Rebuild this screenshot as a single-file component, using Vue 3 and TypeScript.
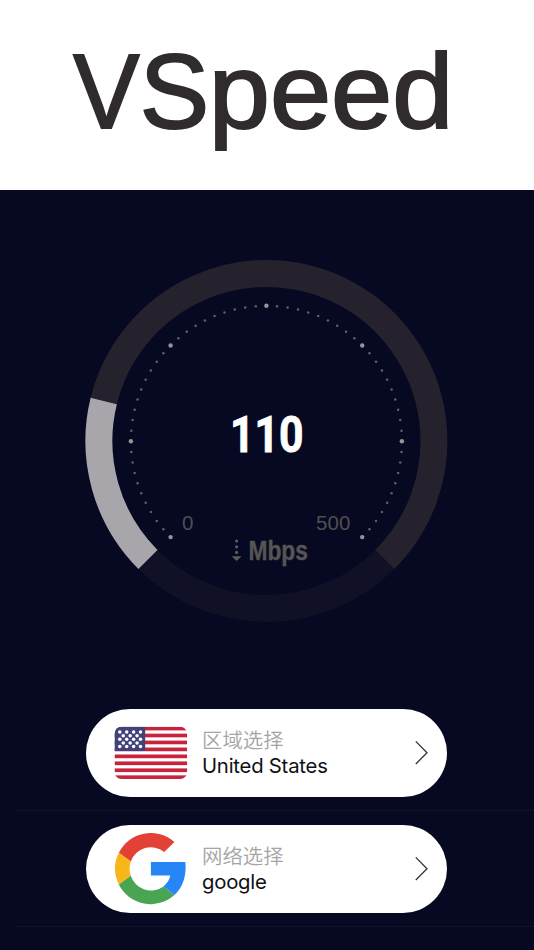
<script setup lang="ts">
interface Dot {
  x: number
  y: number
  major: boolean
}
interface Point {
  x: number
  y: number
}
interface Choice {
  id: 'region' | 'network'
  label: string
  value: string
}

const speed = 110
const maxSpeed = 500
const center = 181
const ringRadius = 167.5

function polar(angle: number, radius: number): Point {
  const rad = (angle * Math.PI) / 180
  return { x: center + radius * Math.sin(rad), y: center - radius * Math.cos(rad) }
}

function arc(from: number, to: number): string {
  const a = polar(from, ringRadius)
  const b = polar(to, ringRadius)
  const large = to - from > 180 ? 1 : 0
  return `M${a.x} ${a.y}A${ringRadius} ${ringRadius} 0 ${large} 1 ${b.x} ${b.y}`
}

const valueAngle = -135 + 58.8

// 60 steps of 4.5 degrees, a larger dot on each tenth
const dots: Dot[] = Array.from({ length: 61 }, (_, i) => ({
  ...polar(-135 + i * 4.5, 135.5),
  major: i % 10 === 0,
}))

const stars: Point[] = []
for (let row = 0; row < 5; row++) {
  const odd = row % 2 === 1
  for (let col = 0; col < (odd ? 3 : 4); col++) {
    stars.push({ x: 5.4 + col * 6.9 + (odd ? 3.45 : 0), y: 5.4 + row * 3.6 })
  }
}

const choices: Choice[] = [
  { id: 'region', label: '区域选择', value: 'United States' },
  { id: 'network', label: '网络选择', value: 'google' },
]
</script>

<template>
  <main class="page">
    <header class="header">
      <h1 class="title">
        <svg class="wordmark" width="534" height="190" viewBox="0 0 534 190">
          <text y="128"><tspan x="73.2" textLength="66.3" lengthAdjust="spacingAndGlyphs">V</tspan><tspan x="139.8" textLength="69.4" lengthAdjust="spacingAndGlyphs">S</tspan><tspan x="208.8" textLength="244.5" lengthAdjust="spacingAndGlyphs">peed</tspan></text>
        </svg>
      </h1>
    </header>

    <section class="panel">
      <svg class="gauge" width="362" height="362" viewBox="-0.4 0 362 362">
        <path :d="arc(135, 225)" class="ring rest" />
        <path :d="arc(valueAngle, 135)" class="ring track" />
        <path :d="arc(-135, valueAngle)" class="ring value" />
        <circle
          v-for="(dot, i) in dots"
          :key="i"
          :cx="dot.x"
          :cy="dot.y + 0.3"
          :r="dot.major ? 2.2 : 1.25"
          :class="dot.major ? 'dot-major' : 'dot'"
        />
        <text class="speed" x="144.6" y="191.5" textLength="73.5" lengthAdjust="spacingAndGlyphs">{{ speed }}</text>
        <text class="bound" x="96.7" y="270">0</text>
        <text class="bound" x="230.7" y="270">{{ maxSpeed }}</text>
        <g class="download">
          <circle cx="151.2" cy="281" r="1.6" />
          <circle cx="151.2" cy="286.8" r="1.6" />
          <circle cx="151.2" cy="292.4" r="1.6" />
          <path d="M146.2 296.3h10l-5 4.7z" />
        </g>
        <text class="unit" x="163" y="299.5" textLength="59.5" lengthAdjust="spacingAndGlyphs">Mbps</text>
      </svg>

      <div v-for="choice in choices" :key="choice.id" class="row">
        <button class="card" type="button">
          <svg v-if="choice.id === 'region'" class="icon" width="74" height="73" viewBox="0 0 74 73">
            <clipPath id="flag-shape"><rect x="0.6" y="10.7" width="72.5" height="52.4" rx="7" /></clipPath>
            <g clip-path="url(#flag-shape)">
              <g transform="translate(0.4 10.7)">
                <rect width="73" height="52.4" fill="#fff" />
                <rect v-for="n in 8" :key="n" :y="(n - 1) * 6.95" width="73" height="3.7" fill="#c8233d" />
                <rect width="30.8" height="24.3" fill="#41427a" />
                <circle v-for="(s, i) in stars" :key="i" :cx="s.x" :cy="s.y" r="1.75" fill="#fff" />
              </g>
            </g>
          </svg>
          <svg v-else class="icon" width="74" height="73" viewBox="0 0 74 73">
            <path fill="#e34135" d="M60.4 10A35.6 35.6 0 0 0 4.8 20.8L16.8 29.5A21.2 21.2 0 0 1 50.2 20.1Z" />
            <path fill="#f8b61b" d="M4.8 20.8A35.6 35.6 0 0 0 4.8 52.4L16.8 43.8A21.2 21.2 0 0 1 16.8 29.5Z" />
            <path fill="#4aa553" d="M4.8 52.4A35.6 35.6 0 0 0 60.4 63.1L49.5 54.5A21.2 21.2 0 0 1 16.8 43.8Z" />
            <path fill="#2686f5" d="M36.9 30H71.3C72.8 42 69.5 55 60.4 63.1L49.5 54.5C53 51.6 55.5 48 56.3 43.6H36.9Z" />
          </svg>
          <span class="copy">
            <span class="label">{{ choice.label }}</span>
            <span class="name">{{ choice.value }}</span>
          </span>
          <svg class="chevron" width="14" height="25" viewBox="0 0 14 25">
            <path d="M1.8 1.4 13 12.7 1.8 24" />
          </svg>
        </button>
      </div>
    </section>
  </main>
</template>

<style>
body {
  margin: 0;
  background: #070822;
}
</style>

<style scoped>
.page {
  width: 534px;
  height: 950px;
  overflow: hidden;
  background: #070822;
}
.header {
  height: 190px;
  background: #fff;
}
.title {
  margin: 0;
}
.wordmark {
  display: block;
  font: 400 106px 'Liberation Sans', Arial, sans-serif;
  fill: #302c2d;
  stroke: #302c2d;
  stroke-width: 2px;
}
.panel {
  display: flex;
  flex-direction: column;
  padding-top: 70px;
}
.gauge {
  display: block;
  margin: 0 0 73px 85px;
  overflow: visible;
}
.ring {
  fill: none;
  stroke-width: 27px;
}
.rest {
  stroke: #101126;
}
.track {
  stroke: #25212d;
}
.value {
  stroke: #a8a6ab;
}
.dot {
  fill: #5f6069;
}
.dot-major {
  fill: #969694;
}
.speed {
  font: 700 50.5px Roboto, Arial, sans-serif;
  fill: #fff;
  stroke: #fff;
  stroke-width: 0.9px;
}
.unit {
  font: 700 27px 'Liberation Sans Narrow', 'Liberation Sans', Arial, sans-serif;
  fill: #555554;
  stroke: #555554;
  stroke-width: 0.4px;
}
.bound {
  font: 400 20.5px 'Liberation Sans', Arial, sans-serif;
  fill: #504f50;
}
.download {
  fill: #5c5c5a;
}
.row {
  box-sizing: border-box;
  height: 116px;
  padding: 14px 0 0 86px;
  background: linear-gradient(#11122a, #11122a) 15px 115px / 519px 1px no-repeat;
}
.card {
  box-sizing: border-box;
  display: flex;
  align-items: center;
  width: 361px;
  height: 87.5px;
  padding: 0 19px 0 28px;
  border: 0;
  border-radius: 44px;
  background: #fff;
  text-align: left;
}
.icon {
  flex: none;
}
.copy {
  display: flex;
  flex: 1;
  flex-direction: column;
  margin-left: 14px;
}
.label {
  padding-top: 1px;
  font: 350 20.4px/25px 'Noto Sans CJK SC', sans-serif;
  color: #a5a5a5;
}
.name {
  font: 400 20.3px/27px Inter, sans-serif;
  letter-spacing: -0.22px;
  color: #101012;
}
.chevron {
  flex: none;
  fill: none;
  stroke: #333;
  stroke-width: 1.3px;
}
</style>
